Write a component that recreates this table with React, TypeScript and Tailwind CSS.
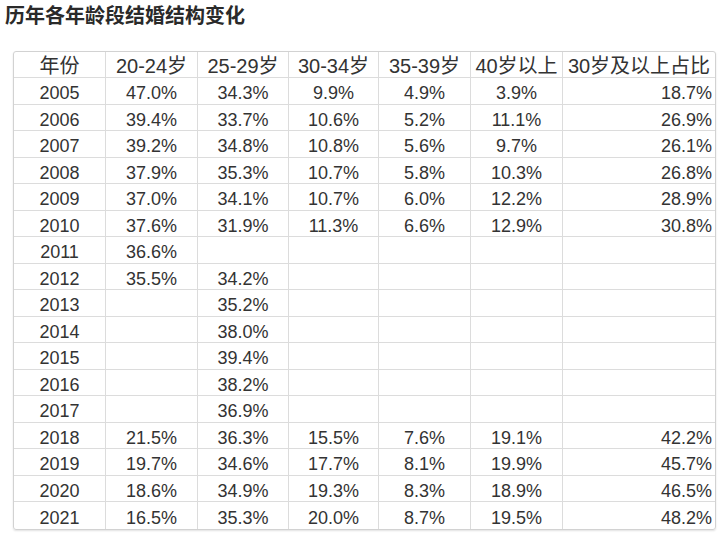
import React from "react"

// 每行：年份 + 六个占比，空字符串表示无数据
const rows: string[][] = [
    ["2005", "47.0%", "34.3%", "9.9%", "4.9%", "3.9%", "18.7%"],
    ["2006", "39.4%", "33.7%", "10.6%", "5.2%", "11.1%", "26.9%"],
    ["2007", "39.2%", "34.8%", "10.8%", "5.6%", "9.7%", "26.1%"],
    ["2008", "37.9%", "35.3%", "10.7%", "5.8%", "10.3%", "26.8%"],
    ["2009", "37.0%", "34.1%", "10.7%", "6.0%", "12.2%", "28.9%"],
    ["2010", "37.6%", "31.9%", "11.3%", "6.6%", "12.9%", "30.8%"],
    ["2011", "36.6%", "", "", "", "", ""],
    ["2012", "35.5%", "34.2%", "", "", "", ""],
    ["2013", "", "35.2%", "", "", "", ""],
    ["2014", "", "38.0%", "", "", "", ""],
    ["2015", "", "39.4%", "", "", "", ""],
    ["2016", "", "38.2%", "", "", "", ""],
    ["2017", "", "36.9%", "", "", "", ""],
    ["2018", "21.5%", "36.3%", "15.5%", "7.6%", "19.1%", "42.2%"],
    ["2019", "19.7%", "34.6%", "17.7%", "8.1%", "19.9%", "45.7%"],
    ["2020", "18.6%", "34.9%", "19.3%", "8.3%", "18.9%", "46.5%"],
    ["2021", "16.5%", "35.3%", "20.0%", "8.7%", "19.5%", "48.2%"],
]

const headers = ["年份", "20-24岁", "25-29岁", "30-34岁", "35-39岁", "40岁以上", "30岁及以上占比"]

const font = { fontFamily: '"Liberation Sans", "Noto Sans CJK SC", sans-serif' }

const App = () => {
    return (
        <div className="w-[721px] h-[536px] bg-white text-[#333]" style={font}>
            <h1
                className="pt-[3px] pl-[5px] text-[20px] leading-[24px] font-bold text-[#2a2a2a]"
                style={{ fontFamily: '"Noto Sans CJK SC", sans-serif' }}
            >
                历年各年龄段结婚结构变化
            </h1>

            <div className="mt-[24px] ml-[13px] w-[703px] rounded-[3px] border border-[#d2d2d2] shadow-[0_1px_2px_rgba(0,0,0,0.12)] overflow-hidden">
                {/* 表头 */}
                <div className="grid grid-cols-[92px_92px_91px_90px_92px_92px_1fr] h-[26px] border-b border-[#dcdcdc]">
                    {headers.map((h, i) => (
                        <div
                            key={h}
                            className={`flex items-center justify-center pt-[3px] text-[20px] leading-none ${i < 6 ? "border-r border-[#dcdcdc]" : ""}`}
                        >
                            {h}
                        </div>
                    ))}
                </div>

                {/* 数据行 */}
                {rows.map((r, ri) => (
                    <div
                        key={r[0]}
                        className={`grid grid-cols-[92px_92px_91px_90px_92px_92px_1fr] h-[26.5px] ${ri < rows.length - 1 ? "border-b border-[#dcdcdc]" : ""}`}
                    >
                        {r.map((v, i) => (
                            <div
                                key={i}
                                className={`flex items-center pt-[5px] text-[18px] leading-none ${i < 6 ? "justify-center border-r border-[#dcdcdc]" : "justify-end pr-[3px]"}`}
                            >
                                {v}
                            </div>
                        ))}
                    </div>
                ))}
            </div>
        </div>
    )
}

export default App
